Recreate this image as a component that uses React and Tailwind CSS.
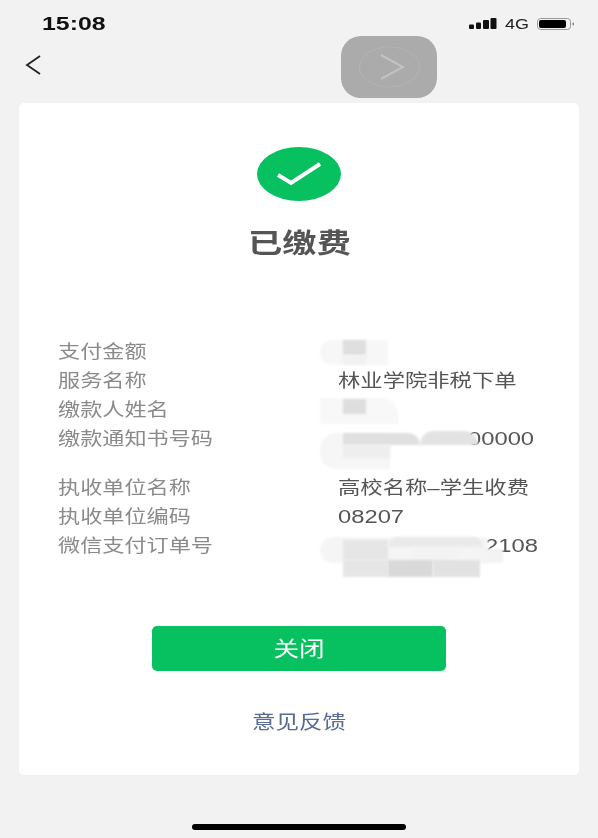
const FONT = "font-['Liberation_Sans','Noto_Sans_CJK_SC',sans-serif]";

// reference is stretched sideways, so text gets a horizontal scale
function Wide({ children, className = 'scale-x-[1.23]' }) {
  return <span className={`inline-block origin-left whitespace-nowrap ${className}`}>{children}</span>;
}

function WideCenter({ children, className = 'scale-x-[1.22]' }) {
  return <span className={`inline-block origin-center whitespace-nowrap ${className}`}>{children}</span>;
}

const rows = [
  { label: '支付金额', value: '' },
  { label: '服务名称', value: '林业学院非税下单' },
  { label: '缴款人姓名', value: '' },
  { label: '缴款通知书号码', value: '00000', offset: 'pl-[130px]', height: 'h-[49px]', digits: true },
  { label: '执收单位名称', value: '高校名称–学生收费' },
  { label: '执收单位编码', value: '08207', digits: true },
  { label: '微信支付订单号', value: '2108', offset: 'pl-[147px]', digits: true },
];

const patches = [
  'left-[320px] top-[340px] w-[68px] h-[25px] bg-[#f7f7f7] rounded-l-xl',
  'left-[343px] top-[340px] w-[23px] h-[15px] bg-[#dfdfdf]',
  'left-[343px] top-[355px] w-[23px] h-[10px] bg-[#f1f1f1]',
  'left-[320px] top-[398px] w-[78px] h-[26px] bg-[#f8f8f8] rounded-tr-2xl',
  'left-[343px] top-[399px] w-[23px] h-[15px] bg-[#dedede]',
  'left-[320px] top-[433px] w-[70px] h-[36px] bg-[#f6f6f6] rounded-l-2xl',
  'left-[343px] top-[433px] w-[77px] h-[12px] bg-[#e0e0e0] rounded-tr-xl',
  'left-[343px] top-[445px] w-[47px] h-[13px] bg-[#eeeeee]',
  'left-[420px] top-[431px] w-[58px] h-[14px] bg-[#e3e3e3] rounded-t-2xl',
  'left-[320px] top-[537px] w-[168px] h-[26px] bg-[#f5f5f5] rounded-l-2xl',
  'left-[480px] top-[549px] w-[23px] h-[14px] bg-[#f3f3f3]',
  'left-[343px] top-[540px] w-[45px] h-[20px] bg-[#e6e6e6]',
  'left-[388px] top-[537px] w-[95px] h-[10px] bg-[#eaeaea] rounded-t-2xl',
  'left-[412px] top-[547px] w-[45px] h-[13px] bg-[#f3f3f3]',
  'left-[343px] top-[560px] w-[45px] h-[17px] bg-[#e6e6e6]',
  'left-[388px] top-[560px] w-[45px] h-[17px] bg-[#d9d9d9]',
  'left-[433px] top-[560px] w-[47px] h-[17px] bg-[#e2e2e2]',
];

export default function App() {
  return (
    <div className={`relative h-[838px] w-[598px] overflow-hidden bg-[#f2f2f2] blur-[0.4px] ${FONT}`}>
      {/* status bar */}
      <div className="flex h-[47px] items-center justify-between pl-[42px] pr-[23px]">
        <Wide className="translate-y-[1px] scale-x-[1.38] text-[18px] font-bold text-[#111]">15:08</Wide>
        <div className="flex items-center">
          <svg width="28" height="11" viewBox="0 0 28 11" fill="#111">
            <rect x="0" y="6.5" width="5" height="4.5" rx="1" />
            <rect x="7" y="4.5" width="5" height="6.5" rx="1" />
            <rect x="14" y="2" width="6" height="9" rx="1" />
            <rect x="21.5" y="0" width="6" height="11" rx="1" />
          </svg>
          <span className="ml-[8px] w-[32px]"><Wide className="scale-x-[1.2] text-[15px] text-[#222]">4G</Wide></span>
          <svg width="38" height="12" viewBox="0 0 38 12">
            <rect x="0.5" y="0.5" width="33" height="11" rx="3" fill="none" stroke="#999" />
            <rect x="2" y="2" width="27" height="8" rx="2" fill="#000" />
            <rect x="35.5" y="4.5" width="1.5" height="3" rx="0.7" fill="#888" />
          </svg>
        </div>
      </div>

      {/* nav */}
      <div className="flex h-[56px] items-start pl-[25px] pt-[8px]">
        <svg width="16" height="20" viewBox="0 0 16 20" fill="none" stroke="#222" strokeWidth="1.8">
          <path d="M15 1 L2 10 L15 19" />
        </svg>
      </div>

      {/* card */}
      <div className="mx-[19px] flex h-[672px] w-[560px] flex-col items-center rounded-[5px] bg-white pt-[44px]">
        <div className="flex h-[54px] w-[84px] items-center justify-center rounded-[50%] bg-[#07c160]">
          <svg width="44" height="24" viewBox="0 0 44 24" fill="none" stroke="#fff" strokeWidth="4">
            <path d="M1 13 L14 21 L43 2" />
          </svg>
        </div>
        <div className="mt-[23px] h-[40px] text-[27px] font-bold leading-[40px] text-[#555]">
          <WideCenter className="scale-x-[1.27]">已缴费</WideCenter>
        </div>

        <div className="mt-[74px] w-full pl-[39px] text-[18px] leading-[29px] text-[#8a8a8a]">
          {rows.map((row) => (
            <div key={row.label} className={`grid grid-cols-[280px_1fr] ${row.height || 'h-[29px]'}`}>
              <div><Wide>{row.label}</Wide></div>
              <div className={`text-[#555] ${row.offset || ''}`}>
                <Wide className={row.digits ? 'scale-x-[1.32]' : 'scale-x-[1.24]'}>{row.value}</Wide>
              </div>
            </div>
          ))}
        </div>

        <button className="mt-[65px] flex h-[45px] w-[294px] items-center justify-center rounded-[5px] bg-[#07c160] text-[21px] text-white">
          <WideCenter>关闭</WideCenter>
        </button>
        <div className="mt-[37px] h-[30px] text-[19px] leading-[30px] text-[#576b95]">
          <WideCenter className="scale-x-[1.24]">意见反馈</WideCenter>
        </div>
      </div>

      {/* mosaic over the hidden values */}
      {patches.map((cls) => (
        <div key={cls} className={`absolute blur-[1px] ${cls}`} />
      ))}

      {/* floating window bubble */}
      <div className="absolute left-[341px] top-[36px] flex h-[62px] w-[96px] items-center justify-center rounded-[20px] bg-[#ababab]">
        <svg width="62" height="42" viewBox="0 0 62 42" fill="none">
          <ellipse cx="31.5" cy="21" rx="30" ry="20" strokeWidth="1" stroke="#b4b4b4" />
          <path d="M23 9 L45 21 L23 33" strokeWidth="2" stroke="#c2c2c2" />
        </svg>
      </div>

      {/* home indicator */}
      <div className="absolute bottom-[8px] left-[192px] h-[6px] w-[214px] rounded-full bg-black" />
    </div>
  );
}
